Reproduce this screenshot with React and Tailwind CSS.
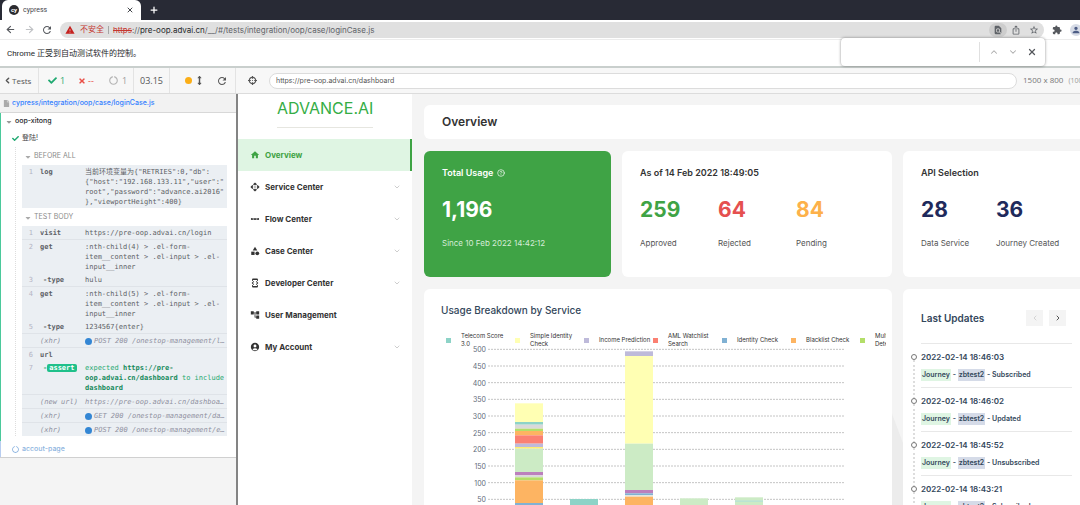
import React from 'react';
import clsx from 'clsx';
import { ArrowLeft, ArrowRight, ChevronDown, ChevronLeft, ChevronRight, ChevronUp, CircleHelp, Plus, X } from 'lucide-react';
import {
  MdAccountCircle,
  MdAccountTree,
  MdApi,
  MdCategory,
  MdDeveloperMode,
  MdExtension,
  MdFindInPage,
  MdHome,
  MdIosShare,
  MdLinearScale,
  MdPerson,
  MdRefresh,
  MdStarBorder,
  MdWarning,
} from 'react-icons/md';
import { FaArrowsAltV, FaCaretDown, FaCheck, FaCircleNotch, FaCrosshairs, FaFile, FaTimes } from 'react-icons/fa';

const menu = [
  { name: 'Overview', icon: MdHome, active: true },
  { name: 'Service Center', icon: MdApi, children: true },
  { name: 'Flow Center', icon: MdLinearScale, children: true },
  { name: 'Case Center', icon: MdCategory, children: true },
  { name: 'Developer Center', icon: MdDeveloperMode, children: true },
  { name: 'User Management', icon: MdAccountTree },
  { name: 'My Account', icon: MdAccountCircle, children: true },
];

const beforeAll = [
  {
    n: 1,
    name: 'log',
    lines: ['当前环境变量为{"RETRIES":0,"db":', '{"host":"192.168.133.11","user":"', 'root","password":"advance.ai2016"', '},"viewportHeight":400}'],
  },
];

const testBody = [
  { n: 1, name: 'visit', lines: ['https://pre-oop.advai.cn/login'], line: true },
  { n: 2, name: 'get', lines: [':nth-child(4) > .el-form-', 'item__content > .el-input > .el-', 'input__inner'] },
  { n: 3, name: 'type', child: true, lines: ['hulu'], line: true },
  { n: 4, name: 'get', lines: [':nth-child(5) > .el-form-', 'item__content > .el-input > .el-', 'input__inner'] },
  { n: 5, name: 'type', child: true, lines: ['1234567{enter}'], line: true },
  { name: '(xhr)', event: true, dot: true, lines: ['POST 200 /onestop-management/l…'], line: true },
  { n: 6, name: 'url', lines: [''] },
  { n: 7, name: 'assert', child: true, assert: true, line: true },
  { name: '(new url)', event: true, lines: ['https://pre-oop.advai.cn/dashboa…'], line: true },
  { name: '(xhr)', event: true, dot: true, lines: ['GET 200 /onestop-management/da…'], line: true },
  { name: '(xhr)', event: true, dot: true, lines: ['POST 200 /onestop-management/e…'] },
];

const legend = [
  { name: 'Telecom Score 3.0', color: '#8dd3c7' },
  { name: 'Simple Identity Check', color: '#ffffb3' },
  { name: 'Income Prediction', color: '#bebada' },
  { name: 'AML Watchlist Search', color: '#fb8072' },
  { name: 'Identity Check', color: '#80b1d3' },
  { name: 'Blacklist Check', color: '#fdb462' },
  { name: 'Multiplatform Detection', color: '#b3de69' },
];

// each segment: [top value, colour], stacked from the highest down
const bars = [
  [[338, '#ffffb3'], [282, '#8dd3c7'], [274, '#d9d9d9'], [262, '#b3de69'], [255, '#fdb462'], [242, '#fb8072'], [217, '#bebada'], [207, '#ffed6f'], [202, '#ccebc5'], [132, '#bc80bd'], [122, '#d9d9d9'], [116, '#b3de69'], [107, '#fdb462'], [39, '#80b1d3']],
  [[51, '#8dd3c7']],
  [[494, '#bebada'], [480, '#ffffb3'], [217, '#ccebc5'], [78, '#bc80bd'], [68, '#80b1d3'], [62, '#e9e6dc'], [58, '#fdb462']],
  [[53, '#ccebc5']],
  [[56, '#ccebc5'], [46, '#8dd3c7'], [43, '#ccebc5']],
];

const updates = [
  { time: '2022-02-14 18:46:03', action: 'Subscribed' },
  { time: '2022-02-14 18:46:02', action: 'Updated' },
  { time: '2022-02-14 18:45:52', action: 'Unsubscribed' },
  { time: '2022-02-14 18:43:21', action: 'Subscribed' },
];

function BrowserChrome() {
  return (
    <header className="relative shrink-0 font-['Roboto','Noto_Sans_CJK_SC',sans-serif]">
      <div className="flex h-5 items-end bg-[#282a35] pl-[2px]">
        <div className="flex h-5 w-[139px] items-center rounded-t-md bg-white px-[7px] text-[7px] text-[#45484d]">
          <span className="grid size-[10px] place-items-center rounded-full bg-[#2b2b2f] text-[6px] leading-none font-bold text-white">cy</span>
          <span className="ml-1 flex-1">cypress</span>
          <button aria-label="Close tab"><X className="size-2 text-[#45484d]" strokeWidth={3} /></button>
        </div>
        <button aria-label="New tab" className="ml-2 self-center"><Plus className="size-[10px] text-white" strokeWidth={3} /></button>
      </div>

      <div className="flex h-5 items-center border-b border-[#ececec] bg-white text-[#55585d]">
        <button aria-label="Back" className="ml-[5px]"><ArrowLeft className="size-[11px]" strokeWidth={2.5} /></button>
        <button aria-label="Forward" className="ml-2"><ArrowRight className="size-[11px] text-[#c0c2c5]" strokeWidth={2.5} /></button>
        <button aria-label="Reload" className="ml-[6px]"><MdRefresh className="size-3" /></button>
        <div className="ml-[7px] flex h-4 flex-1 items-center rounded-full bg-[#e0e0e0] pl-[5px] text-[8px] text-[#5f6368]">
          <MdWarning className="size-[10px] text-[#c5221f]" />
          <span className="ml-[5px] text-[#c5362f]">不安全</span>
          <span className="mx-1 h-2 w-px bg-[#a5a5a5]" />
          <span className="flex-1 font-['Inter',sans-serif] whitespace-nowrap">
            <span className="text-[#c5362f] line-through">https</span>://<span className="text-[#26282b]">pre-oop.advai.cn</span>/__/#/tests/integration/oop/case/loginCase.js
          </span>
          <button aria-label="Find in page" className="grid h-[14px] w-[18px] place-items-center rounded-full bg-[#cdcdcd]"><MdFindInPage className="size-[10px]" /></button>
          <button aria-label="Share" className="ml-1"><MdIosShare className="size-[10px]" /></button>
          <button aria-label="Bookmark" className="mr-[5px] ml-2"><MdStarBorder className="size-[10px]" /></button>
        </div>
        <button aria-label="Extensions" className="ml-2"><MdExtension className="size-[10px]" /></button>
        <button aria-label="Profile" className="-mr-[2px] ml-2 grid size-3 place-items-center rounded-full bg-[#d6dbe6]"><MdPerson className="size-[10px] text-[#4c5c85]" /></button>
      </div>

      <div className="flex h-[26px] items-center bg-white pt-px pl-[7px] text-[8px] text-[#26282b]">
        <p>Chrome 正受到自动测试软件的控制。</p>
      </div>

      <div className="absolute top-[38px] right-[35px] z-10 flex h-7 w-[204px] items-center rounded-sm bg-white text-[#55585d] shadow-[0_0_3px_rgba(0,0,0,0.45)]">
        <input aria-label="Find" className="h-5 w-[139px] border-r border-[#e0e0e0] bg-transparent px-2 text-[8px] outline-none" />
        <button aria-label="Previous match" className="ml-[9px]"><ChevronUp className="size-[10px] text-[#aaa]" strokeWidth={2.5} /></button>
        <button aria-label="Next match" className="ml-[9px]"><ChevronDown className="size-[10px] text-[#aaa]" strokeWidth={2.5} /></button>
        <button aria-label="Close find bar" className="ml-[9px]"><X className="size-[10px]" strokeWidth={3} /></button>
      </div>
    </header>
  );
}

function RunnerBar() {
  return (
    <div className="flex h-7 shrink-0 items-stretch border-t-2 border-b border-t-[#c9cfcd] border-b-[#dcdcdc] bg-[#f7f7f7] font-['Open_Sans',sans-serif] text-[9px] text-[#555]">
      <button className="flex w-[39px] items-center border-r border-[#e3e3e3] pl-[3px] text-[8px]">
        <ChevronLeft className="size-[9px]" strokeWidth={4} />
        Tests
      </button>
      <div className="flex w-[95px] items-center border-r border-[#e3e3e3] pl-[9px]">
        <FaCheck className="size-[9px] text-[#1fa971]" />
        <span className="ml-[3px] w-[18px] text-[#1fa971]">1</span>
        <FaTimes className="size-2 text-[#e94f47]" />
        <span className="ml-[2px] w-[21px] text-[#e94f47]">--</span>
        <FaCircleNotch className="size-[9px] text-[#b5b5b5]" />
        <span className="ml-1 text-[#9a9a9a]">1</span>
      </div>
      <span className="flex w-9 items-center justify-center border-r border-[#e3e3e3] text-[9px]">03.15</span>
      <div className="flex w-[66px] items-center border-r border-[#e3e3e3] pl-[15px]">
        <span className="size-[7px] rounded-full bg-[#fbae17]" />
        <button aria-label="Toggle scrolling" className="ml-[3px]"><FaArrowsAltV className="size-[9px]" /></button>
        <button aria-label="Run all tests" className="ml-3"><MdRefresh className="size-3" /></button>
      </div>
      <div className="flex min-w-0 flex-1 items-center pl-3">
        <button aria-label="Selector playground"><FaCrosshairs className="size-[9px]" /></button>
        <input
          aria-label="Application URL"
          readOnly
          defaultValue="https://pre-oop.advai.cn/dashboard"
          className="ml-3 h-4 min-w-0 flex-1 rounded-full border border-[#dcdcdc] bg-white px-[6px] font-['Inter',sans-serif] text-[7px] text-[#555] outline-none"
        />
        <p className="ml-[6px] w-[57px] overflow-hidden text-[8px] whitespace-nowrap text-[#777]">
          1500 x 800 <span className="ml-[3px] text-[7px] text-[#999]">(100%)</span>
        </p>
      </div>
    </div>
  );
}

function Command({ cmd }) {
  return (
    <li className={clsx('flex pt-[2px] pb-px leading-[10px]', cmd.line && 'border-b border-[#dfe3e8]', cmd.event && 'text-[#8f8f9f] italic')}>
      <span className="w-[11px] text-right text-[#b4b4c4]">{cmd.n}</span>
      <span className={clsx('ml-[7px] w-[45px] shrink-0', !cmd.event && 'font-bold')}>
        {cmd.child && <span className={clsx('ml-[3px]', cmd.assert && 'text-[#1fa971]')}>-</span>}
        {cmd.assert ? <span className="rounded-xs bg-[#1fc08a] px-[2px] text-white">{cmd.name}</span> : cmd.name}
      </span>
      {cmd.assert ? (
        <p className="text-[#1fa971]">
          expected <b className="text-[#168a5b]">https://pre-<br />oop.advai.cn/dashboard</b> to include<br />
          <b className="text-[#168a5b]">dashboard</b>
        </p>
      ) : (
        <p className="whitespace-nowrap">
          {cmd.dot && <span className="mr-[2px] inline-block size-[7px] rounded-full bg-[#3386d4] align-middle" />}
          {cmd.lines.map((text) => (
            <span key={text} className={clsx(!cmd.dot && 'block')}>{text}</span>
          ))}
        </p>
      )}
    </li>
  );
}

function Hook({ title, commands }) {
  return (
    <section>
      <h3 className="flex h-[18px] items-center gap-[2px] pt-px pl-2 text-[7px] text-[#8a8a8a]">
        <FaCaretDown className="size-2 text-[#aaa]" />
        {title}
      </h3>
      <ol className="ml-[6px] bg-[#ebeff3] font-['DejaVu_Sans_Mono','Noto_Sans_CJK_SC',monospace] text-[7px] text-[#5d5f66]">
        {commands.map((cmd, i) => <Command key={i} cmd={cmd} />)}
      </ol>
    </section>
  );
}

function Reporter() {
  return (
    <aside className="w-[236px] shrink-0 overflow-hidden bg-[#f4f4f4] font-['Inter','Noto_Sans_CJK_SC',sans-serif] text-[7px] text-[#444]">
      <div className="flex h-[19px] items-center gap-[2px] border-b border-[#d8d8d8] bg-[#f2f2f2] pl-[3px] shadow-sm">
        <FaFile className="size-[7px] text-[#aaa]" />
        <a href="#spec" className="font-medium text-[#3380ff]">cypress/integration/oop/case/loginCase.js</a>
      </div>
      <div className="border-b border-[#d0d0d0] bg-white">
        <div className="border-l border-[#4bc99b] pb-[5px]">
          <h2 className="flex h-[17px] items-center gap-[2px] pl-1 font-medium text-[#26282b]">
            <FaCaretDown className="size-2 text-[#999]" />
            oop-xitong
          </h2>
          <p className="flex h-[17px] items-center gap-[3px] pl-[11px]">
            <FaCheck className="size-[7px] text-[#1fa971]" />
            登陆!
          </p>
          <div className="mr-[9px] ml-[14px] border-l border-dotted border-[#ddd]">
            <Hook title="BEFORE ALL" commands={beforeAll} />
            <Hook title="TEST BODY" commands={testBody} />
          </div>
        </div>
        <p className="flex h-4 items-center gap-[3px] border-l border-[#b8cdf0] pl-[11px] font-medium text-[#8db4e0]">
          <FaCircleNotch className="size-[7px]" />
          accout-page
        </p>
      </div>
    </aside>
  );
}

function Sidebar() {
  return (
    <nav className="w-[174px] shrink-0 bg-white">
      <div className="mx-auto mb-[11px] h-[34px] w-24 border-b border-[#e6e6e0] pt-1 text-center text-[16px] leading-5 text-[#35ad45]">ADVANCE.AI</div>
      <ul>
        {menu.map((item) => (
          <li key={item.name}>
            <a
              href="#menu"
              className={clsx(
                'flex h-8 items-center pr-[11px] pl-3 text-[8px] font-bold',
                item.active ? 'border-r-2 border-[#3fa345] bg-[#dff5e3] text-[#3fa345]' : 'text-[#333]'
              )}
            >
              <item.icon className="mr-[5px] size-[10px]" />
              <span className="flex-1">{item.name}</span>
              {item.children && <ChevronDown className="size-2 text-[#b5b5b5]" />}
            </a>
          </li>
        ))}
      </ul>
    </nav>
  );
}

function Stat({ value, label, className }) {
  return (
    <div>
      <p className={clsx('text-[21px] leading-7 font-bold', className)}>{value}</p>
      <p className="mt-3 text-[8px] leading-[14px] whitespace-nowrap text-[#555]">{label}</p>
    </div>
  );
}

function UsageChart() {
  const y = (value) => 170 - value / 3;

  return (
    <section className="h-[230px] rounded-md bg-white">
      <h2 className="px-[17px] pt-[14px] text-[10px] leading-[14px] font-medium text-[#33475b]">Usage Breakdown by Service</h2>
      <ul className="mt-[15px] mr-[6px] ml-[22px] flex h-4 items-center overflow-hidden">
        {legend.map((item) => (
          <li key={item.name} className="flex w-[69px] shrink-0 items-center gap-[10px] text-[6px] leading-[8px] text-[#333]">
            <span className="size-[5px] shrink-0" style={{ background: item.color }} />
            <span className="w-[52px] shrink-0">{item.name === 'Telecom Score 3.0' ? <>Telecom Score<br />3.0</> : item.name}</span>
          </li>
        ))}
      </ul>
      <svg width="430" height="171" className="-mt-[2px]" role="img" aria-label="Usage by service">
        {[500, 450, 400, 350, 300, 250, 200, 150, 100, 50].map((value) => (
          <g key={value}>
            <text x="62" y={y(value) + 3} textAnchor="end" fontSize="7" fill="#5f6b7a">{value}</text>
            <line x1="64" x2="421" y1={y(value)} y2={y(value)} stroke="#c4c4c4" strokeDasharray="2 1" />
          </g>
        ))}
        {bars.map((bar, i) =>
          bar.map(([top, color], j) => (
            <rect key={`${i}-${j}`} x={91 + i * 55} y={y(top)} width="28" height={(top - (bar[j + 1]?.[0] ?? 0)) / 3} fill={color} />
          ))
        )}
      </svg>
    </section>
  );
}

function LastUpdates() {
  return (
    <section className="h-[230px] rounded-l-md bg-white pr-2 pl-[18px]">
      <div className="flex h-[55px] items-center border-b border-[#e8e8e8] pt-1 pr-[6px]">
        <h2 className="flex-1 text-[10px] font-semibold text-[#33475b]">Last Updates</h2>
        <button aria-label="Previous page" className="grid h-4 w-[17px] place-items-center bg-[#f4f4f4]"><ChevronLeft className="size-2 text-[#c4c4c4]" /></button>
        <button aria-label="Next page" className="ml-[6px] grid h-4 w-[17px] place-items-center bg-[#f4f4f4]"><ChevronRight className="size-2 text-[#555]" strokeWidth={3} /></button>
      </div>
      <ol className="text-[8px] font-semibold text-[#33475b]">
        {updates.map((item) => (
          <li key={item.time} className="relative h-11 border-b border-[#e8e8e8] pt-[7px]">
            <span className="absolute top-4 -bottom-3 -left-2 border-l-2 border-dotted border-[#ddd]" />
            <span className="absolute top-[10px] -left-[10px] size-[6px] rounded-full border border-[#777] bg-white" />
            <p className="leading-3">{item.time}</p>
            <p className="mt-[6px] text-[7px] leading-3">
              <span className="inline-block bg-[#dff5e3] px-px">Journey</span> - <span className="inline-block bg-[#d5dbe8] px-px">zbtest2</span> - {item.action}
            </p>
          </li>
        ))}
      </ol>
    </section>
  );
}

function Dashboard() {
  return (
    <main className="relative flex min-w-0 flex-1 flex-col gap-3 overflow-hidden bg-[#f4f4f4] pt-[11px] pl-3">
      {/* faint backdrop shape */}
      <svg className="absolute right-[177px] bottom-0" width="12" height="94" aria-hidden="true">
        <path d="M0 0 12 32V94H0Z" fill="#ececec" />
      </svg>
      <h1 className="flex h-[34px] shrink-0 items-center rounded-l-md bg-white pl-[18px] text-[12px] font-semibold text-[#333]">Overview</h1>
      <div className="relative grid grid-cols-[minmax(0,1fr)_177px] gap-x-[11px] gap-y-3">
        <div className="grid grid-cols-[187fr_270fr] gap-[11px]">
          <section className="h-[126px] rounded-md bg-[#3fa345] px-[18px] pt-[15px] text-white">
            <h2 className="flex items-center gap-1 text-[9px] leading-[14px] font-semibold">
              Total Usage
              <CircleHelp className="size-2" />
            </h2>
            <p className="mt-4 text-[21px] leading-7 font-bold">1,196</p>
            <p className="mt-3 text-[8px] leading-[14px] text-[#d5ecd7]">Since 10 Feb 2022 14:42:12</p>
          </section>
          <section className="h-[126px] rounded-md bg-white px-[18px] pt-[15px]">
            <h2 className="mb-4 text-[9px] leading-[14px] font-semibold text-[#333]">As of 14 Feb 2022 18:49:05</h2>
            <div className="grid grid-cols-3">
              <Stat value="259" label="Approved" className="text-[#3fa345]" />
              <Stat value="64" label="Rejected" className="text-[#e5504f]" />
              <Stat value="84" label="Pending" className="text-[#fdb14a]" />
            </div>
          </section>
        </div>
        <section className="h-[126px] rounded-l-md bg-white pt-[15px] pl-[18px]">
          <h2 className="mb-4 text-[9px] leading-[14px] font-semibold text-[#333]">API Selection</h2>
          <div className="grid grid-cols-[75px_1fr]">
            <Stat value="28" label="Data Service" className="text-[#1f2a5c]" />
            <Stat value="36" label="Journey Created" className="text-[#1f2a5c]" />
          </div>
        </section>
        <UsageChart />
        <LastUpdates />
      </div>
    </main>
  );
}

export default function App() {
  return (
    <div className="flex h-screen flex-col overflow-hidden bg-[#f4f4f4]">
      <BrowserChrome />
      <RunnerBar />
      <div className="flex min-h-0 flex-1">
        <Reporter />
        <div className="flex min-w-0 flex-1 border-l-2 border-[#848484] font-['Inter',sans-serif]">
          <Sidebar />
          <Dashboard />
        </div>
      </div>
    </div>
  );
}
